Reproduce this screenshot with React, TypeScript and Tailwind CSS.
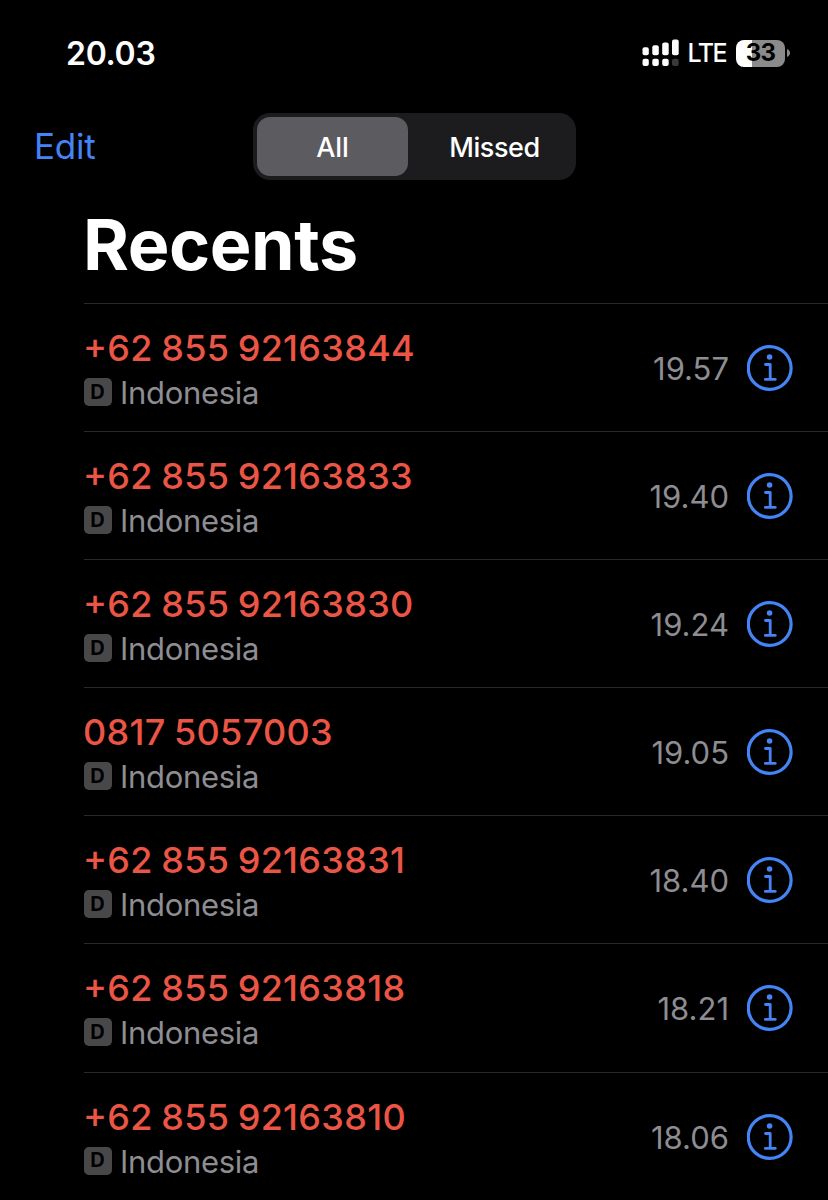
const calls = [
  { number: "+62 855 92163844", time: "19.57" },
  { number: "+62 855 92163833", time: "19.40" },
  { number: "+62 855 92163830", time: "19.24" },
  { number: "0817 5057003", time: "19.05" },
  { number: "+62 855 92163831", time: "18.40" },
  { number: "+62 855 92163818", time: "18.21" },
  { number: "+62 855 92163810", time: "18.06" },
];

const SignalIcon = () => (
  <svg width="38" height="28" viewBox="0 0 38 28" fill="white">
    <rect x="0.5" y="8.3" width="6.3" height="8" rx="2" />
    <rect x="10.3" y="6.3" width="6.5" height="10" rx="2" />
    <rect x="20.2" y="3.6" width="6.5" height="12.7" rx="2" />
    <rect x="30" y="0.5" width="6.7" height="15.8" rx="2" />
    <rect x="0.5" y="19.8" width="6.3" height="7.3" rx="2" />
    <rect x="10.3" y="19.8" width="6.5" height="7.3" rx="2" />
    <rect x="20.2" y="19.8" width="6.5" height="7.3" rx="2" />
    <rect x="30" y="19.8" width="6.7" height="7.3" rx="2" fill="#3a3a3c" />
  </svg>
);

const Battery = () => (
  <div className="flex items-center gap-[2px]">
    <div className="flex h-[27px] w-[49px] items-center justify-center rounded-[8px] bg-linear-to-r from-white from-33% to-[#8b8b8b] to-33%">
      <span className="text-[24px] leading-none font-bold tracking-[-0.8px] text-black">33</span>
    </div>
    <svg width="3" height="8" viewBox="0 0 3 8" fill="#8b8b8b">
      <path d="M0 0C2 .8 3 2.3 3 4S2 7.2 0 8Z" />
    </svg>
  </div>
);

const InfoIcon = () => (
  <svg className="shrink-0" width="46" height="46" viewBox="0 0 46 46" fill="none" stroke="#4484f4">
    <circle cx="22.7" cy="23" r="21.4" strokeWidth="3.2" />
    <circle cx="22.6" cy="12" r="2.8" fill="#4484f4" stroke="none" />
    <path d="M18.5 19.5H23.2V34.200M18.3 34.4H28.3" strokeWidth="2.8" strokeLinecap="round" strokeLinejoin="round" />
  </svg>
);

const CallRow = ({ number, time }: { number: string; time: string }) => (
  <li className="flex h-[128.1px] items-start border-t border-[#29292b] pr-[35px]">
    <div className="flex-1 pt-[21px]">
      <p className="-ml-px text-[36px] leading-[46px] font-[550] tracking-[0.3px] [word-spacing:-1.5px] text-[#eb5545] [font-feature-settings:'case']">
        {number}
      </p>
      <div className="flex h-[42px] items-center gap-[8px]">
        <span className="flex size-[28px] items-center justify-center rounded-[5px] bg-[#48484a] pr-px pb-px text-[20px] leading-none font-bold text-black">
          D
        </span>
        <span className="pt-[2px] text-[31px] leading-[42px] tracking-[-0.3px] text-[#8d8d92]">Indonesia</span>
      </div>
    </div>
    <div className="flex items-start gap-[18px] pt-[41px]">
      <span className="pt-px text-[31px] leading-[46px] text-[#8d8d92]">{time}</span>
      <InfoIcon />
    </div>
  </li>
);

export default function App() {
  return (
    <div className="h-[1200px] w-[828px] overflow-hidden bg-black font-['Inter',sans-serif] text-white">
      {/* Status bar */}
      <div className="flex h-[106px] items-center justify-between pr-[38px] pl-[66px]">
        <span className="pt-px text-[32px] leading-none font-semibold tracking-[-0.3px]">20.03</span>
        <div className="flex items-center">
          <SignalIcon />
          <span className="mr-[10px] ml-[8px] pt-px text-[25px] leading-none font-medium tracking-[-1.6px]">LTE</span>
          <Battery />
        </div>
      </div>

      {/* Navigation */}
      <div className="flex h-[82px] items-start pl-[34px]">
        <button className="w-[219px] pt-[17px] text-left text-[35px] leading-[46px] tracking-[-0.2px] text-[#4484f4]">Edit</button>
        <div className="mt-[7px] flex h-[67px] w-[323px] rounded-[17px] bg-[#1c1c1e] p-[4px] text-[27px] font-medium">
          <button className="w-[151px] rounded-[13px] bg-[#5b5b60] pt-[3px]">All</button>
          <button className="flex-1 pt-[3px] pl-[9px] tracking-[-0.4px]">Missed</button>
        </div>
      </div>

      <h1 className="h-[115px] pt-[17px] pl-[83px] text-[70px] leading-[80px] font-bold tracking-[-0.4px]">Recents</h1>

      <ul className="pl-[84px]">
        {calls.map((call) => (
          <CallRow key={call.number} {...call} />
        ))}
      </ul>
    </div>
  );
}
